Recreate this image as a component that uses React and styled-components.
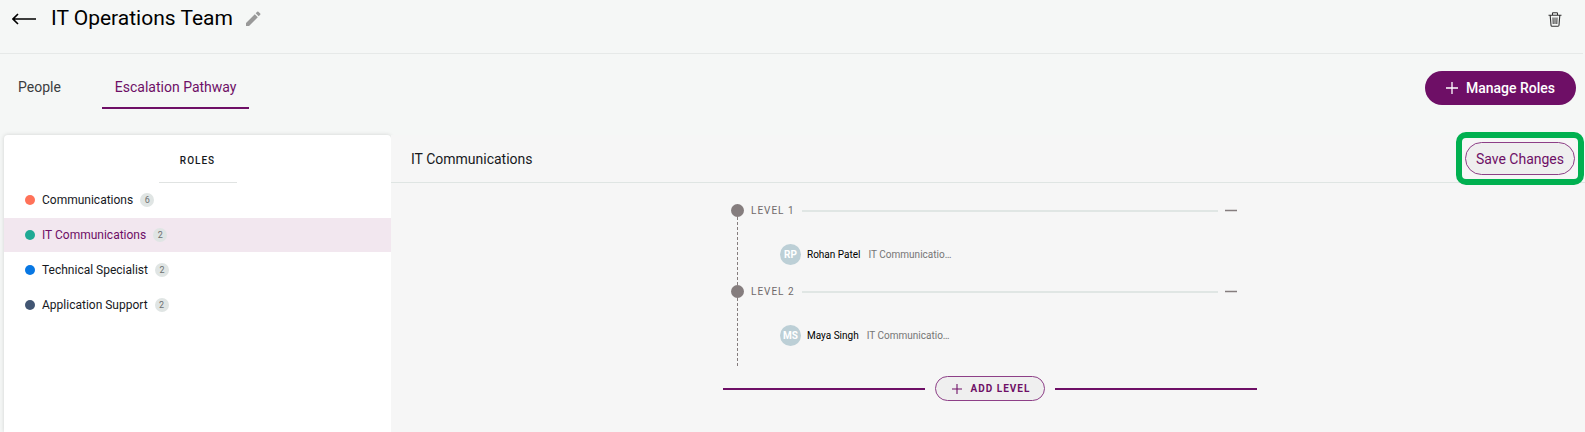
import React, { useState } from "react";
import styled, { createGlobalStyle } from "styled-components";

const GlobalStyle = createGlobalStyle`
  * {
    box-sizing: border-box;
  }
  body {
    margin: 0;
    background-color: #f5f7f6;
    color: #16191d;
    font-family: Roboto, "Liberation Sans", sans-serif;
  }
  button {
    font-family: inherit;
    cursor: pointer;
  }
`;

const Page = styled.div`
  display: flex;
  flex-direction: column;
  min-height: 100vh;
`;

const Header = styled.header`
  display: flex;
  align-items: flex-start;
  height: 54px;
  margin-right: 2px;
  padding: 6px 21px 0 12px;
  border-bottom: 1px solid #e6e9e8;
`;

const IconButton = styled.button`
  display: flex;
  align-items: center;
  height: 26px;
  padding: 0;
  border: none;
  background: none;
  color: ${({ $color }) => $color || "#000"};
`;

const Title = styled.h1`
  margin: 0 12px 0 15px;
  color: #000;
  font-size: 21px;
  font-weight: 400;
  line-height: 24px;
`;

const Spacer = styled.div`
  flex: 1;
`;

const TabBar = styled.div`
  display: flex;
  justify-content: space-between;
  align-items: flex-start;
  height: 81px;
  padding: 17px 9px 0 5px;
`;

const Tabs = styled.nav`
  display: flex;
  gap: 28px;
`;

const Tab = styled.button`
  height: 38px;
  padding: 0 13px 4px;
  border: none;
  border-bottom: 2px solid ${({ $active }) => ($active ? "#6e0f66" : "transparent")};
  background: none;
  color: ${({ $active }) => ($active ? "#6e0f66" : "#3b3d3f")};
  font-size: 14px;
  line-height: 20px;
`;

const ManageButton = styled.button`
  display: flex;
  align-items: center;
  gap: 8px;
  height: 34px;
  padding: 0 21px;
  border: none;
  border-radius: 17px;
  background-color: #6e0f66;
  color: #fff;
  font-size: 14px;
  font-weight: 500;
`;

const Content = styled.main`
  display: flex;
  flex: 1;
`;

const RolesPanel = styled.aside`
  width: 387px;
  margin-left: 4px;
  border-radius: 4px 4px 0 0;
  background-color: #fff;
  box-shadow: 0 0 4px rgba(0, 0, 0, 0.15);
`;

const RolesTitle = styled.h2`
  width: 78px;
  height: 48px;
  margin: 0 auto;
  border-bottom: 1px solid #e0e3e2;
  font-size: 10px;
  font-weight: 500;
  line-height: 52px;
  letter-spacing: 1px;
  text-align: center;
`;

const RoleList = styled.ul`
  display: flex;
  flex-direction: column;
  gap: 1px;
  margin: 0;
  padding: 0;
  list-style: none;
`;

const RoleButton = styled.button`
  display: flex;
  align-items: center;
  width: 100%;
  height: 34px;
  padding: 0 21px;
  border: none;
  background-color: ${({ $active }) => ($active ? "#f2e7ef" : "transparent")};
  color: ${({ $active }) => ($active ? "#6e0f66" : "#16191d")};
  font-size: 12px;
`;

const Dot = styled.span`
  width: 10px;
  height: 10px;
  margin-right: 7px;
  border-radius: 50%;
  background-color: ${({ $color }) => $color};
`;

const Count = styled.span`
  width: 14px;
  height: 14px;
  margin-left: 7px;
  border-radius: 50%;
  background-color: #e0e5e4;
  color: #6d7071;
  font-size: 9px;
  line-height: 14px;
  text-align: center;
`;

const Pathway = styled.section`
  flex: 1;
  min-width: 0;
  background-color: #f6f6f6;
`;

const PathwayHeader = styled.div`
  display: flex;
  justify-content: space-between;
  align-items: center;
  height: 48px;
  padding: 0 1px 0 20px;
  border-bottom: 1px solid #dfe5e3;
`;

const PathwayTitle = styled.h2`
  margin: 0;
  font-size: 14px;
  font-weight: 400;
`;

const Highlight = styled.div`
  padding: 4px 3px;
  margin: -3px 0;
  border: 6px solid #00b050;
  border-radius: 10px;
`;

const SaveButton = styled.button`
  display: block;
  height: 33px;
  padding: 0 10px;
  border: 1px solid #8d3f87;
  border-radius: 17px;
  background-color: #efefef;
  color: #6e0f66;
  font-size: 14px;
`;

const PathwayBody = styled.div`
  padding: 21px 0 0 4px;
`;

const Levels = styled.div`
  width: 534px;
  max-width: 100%;
  margin: 0 auto;
`;

const Level = styled.section`
  display: flex;
  align-items: stretch;
  padding: 0 20px 0 8px;
`;

const Track = styled.div`
  display: flex;
  flex-direction: column;
  align-items: center;
  width: 13px;
  margin-right: 7px;
`;

const Node = styled.span`
  width: 13px;
  height: 13px;
  border-radius: 50%;
  background-color: #857d7e;
`;

const Dashes = styled.span`
  flex: 1;
  width: 1px;
  background: repeating-linear-gradient(#857d7e 0 3px, transparent 3px 5px);
`;

const LevelBody = styled.div`
  flex: 1;
  height: 81px;
`;

const LevelHead = styled.div`
  display: flex;
  align-items: center;
  height: 13px;
`;

const LevelName = styled.h3`
  margin: 0;
  color: #6f696a;
  font-size: 10px;
  font-weight: 400;
  line-height: 13px;
  letter-spacing: 1px;
`;

const Rule = styled.span`
  flex: 1;
  height: 2px;
  margin: 0 7px;
  background-color: #e0e6e4;
`;

const RemoveButton = styled.button`
  display: flex;
  align-items: center;
  width: 12px;
  height: 13px;
  padding: 0;
  border: none;
  background: none;
`;

const Member = styled.div`
  display: flex;
  align-items: center;
  height: 21px;
  margin: 27px 0 0 29px;
  font-size: 10px;
`;

const Avatar = styled.span`
  width: 21px;
  height: 21px;
  margin-right: 6px;
  border-radius: 50%;
  background-color: #bccfd6;
  color: #fff;
  font-weight: 700;
  line-height: 21px;
  text-align: center;
`;

const MemberName = styled.span`
  margin-right: 8px;
  color: #000;
`;

const MemberRole = styled.span`
  color: #757575;
`;

const AddRow = styled.div`
  display: flex;
  align-items: center;
  gap: 10px;
  margin-top: 10px;
`;

const AddRule = styled.span`
  flex: 1;
  height: 2px;
  background-color: #6e0f66;
`;

const AddButton = styled.button`
  display: flex;
  align-items: center;
  gap: 9px;
  height: 25px;
  padding: 0 14px 0 16px;
  border: 1px solid #8d3f87;
  border-radius: 13px;
  background-color: #efefef;
  color: #6e0f66;
  font-size: 10px;
  font-weight: 700;
  letter-spacing: 1px;
`;

const roles = [
  { name: "Communications", count: 6, color: "#ff7259" },
  { name: "IT Communications", count: 2, color: "#1fa994" },
  { name: "Technical Specialist", count: 2, color: "#0877e3" },
  { name: "Application Support", count: 2, color: "#425673" },
];

const levels = [
  { name: "LEVEL 1", initials: "RP", member: "Rohan Patel" },
  { name: "LEVEL 2", initials: "MS", member: "Maya Singh" },
];

const BackIcon = () => (
  <svg width="24" height="12" viewBox="0 0 24 12" fill="none" stroke="currentColor" strokeWidth="1.6">
    <path d="M6 1 1 6l5 5M1 6h23" />
  </svg>
);

const PencilIcon = () => (
  <svg width="16" height="16" viewBox="0 0 16 16" fill="currentColor">
    <path d="M1 12 9.8 3.2l3 3L4 15H1zM10.7 2.3l1.5-1.5q.6-.5 1.2 0l1.8 1.8q.5.6 0 1.2l-1.5 1.5z" />
  </svg>
);

const TrashIcon = () => (
  <svg width="14" height="15" viewBox="0 0 14 15" fill="none" stroke="currentColor" strokeWidth="1.1">
    <path d="M.5 3.2h13M4.5 3V1.4q0-.6.6-.6h3.8q.6 0 .6.6V3M2.2 3.4l.8 9.8q.1 1 1 1h6q.9 0 1-1l.8-9.8" />
    <path d="M5 5.5 5.2 12M7 5.5V12M9 5.5 8.8 12" strokeWidth="1" />
  </svg>
);

const PlusIcon = ({ size }) => (
  <svg width={size} height={size} viewBox="0 0 12 12" fill="none" stroke="currentColor" strokeWidth="1.3">
    <path d="M6 0v12M0 6h12" />
  </svg>
);

const MinusIcon = () => (
  <svg width="12" height="3" viewBox="0 0 12 3">
    <path d="M0 1.5h12" stroke="#857d7e" strokeWidth="1.5" />
  </svg>
);

const App = () => {
  const [tab, setTab] = useState("Escalation Pathway");
  const [role, setRole] = useState("IT Communications");

  return (
    <>
      <GlobalStyle />
      <Page>
        <Header>
          <IconButton aria-label="Back">
            <BackIcon />
          </IconButton>
          <Title>IT Operations Team</Title>
          <IconButton aria-label="Edit name" $color="#999">
            <PencilIcon />
          </IconButton>
          <Spacer />
          <IconButton aria-label="Delete team" $color="#333">
            <TrashIcon />
          </IconButton>
        </Header>

        <TabBar>
          <Tabs>
            {["People", "Escalation Pathway"].map((item) => (
              <Tab key={item} $active={item === tab} onClick={() => setTab(item)}>
                {item}
              </Tab>
            ))}
          </Tabs>
          <ManageButton>
            <PlusIcon size={12} />
            Manage Roles
          </ManageButton>
        </TabBar>

        <Content>
          <RolesPanel>
            <RolesTitle>ROLES</RolesTitle>
            <RoleList>
              {roles.map((item) => (
                <li key={item.name}>
                  <RoleButton $active={item.name === role} onClick={() => setRole(item.name)}>
                    <Dot $color={item.color} />
                    {item.name}
                    <Count>{item.count}</Count>
                  </RoleButton>
                </li>
              ))}
            </RoleList>
          </RolesPanel>

          <Pathway>
            <PathwayHeader>
              <PathwayTitle>{role}</PathwayTitle>
              <Highlight>
                <SaveButton>Save Changes</SaveButton>
              </Highlight>
            </PathwayHeader>

            <PathwayBody>
              <Levels>
                {levels.map((level) => (
                  <Level key={level.name}>
                    <Track>
                      <Node />
                      <Dashes />
                    </Track>
                    <LevelBody>
                      <LevelHead>
                        <LevelName>{level.name}</LevelName>
                        <Rule />
                        <RemoveButton aria-label={"Remove " + level.name}>
                          <MinusIcon />
                        </RemoveButton>
                      </LevelHead>
                      <Member>
                        <Avatar>{level.initials}</Avatar>
                        <MemberName>{level.member}</MemberName>
                        <MemberRole>IT Communicatio…</MemberRole>
                      </Member>
                    </LevelBody>
                  </Level>
                ))}
                <AddRow>
                  <AddRule />
                  <AddButton>
                    <PlusIcon size={10} />
                    ADD LEVEL
                  </AddButton>
                  <AddRule />
                </AddRow>
              </Levels>
            </PathwayBody>
          </Pathway>
        </Content>
      </Page>
    </>
  );
};

export default App;
